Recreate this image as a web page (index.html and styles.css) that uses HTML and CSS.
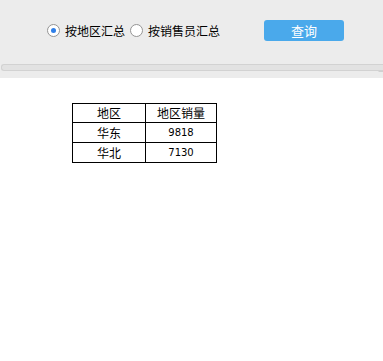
FILE: index.html
```html
<!doctype html>
<html>
<head>
<meta charset="utf-8">
<title>销量汇总</title>
<link rel="stylesheet" href="styles.css">
</head>
<body>
<div class="toolbar">
	<div class="query">
		<label class="opt"><span class="radio on"></span>按地区汇总</label>
		<label class="opt"><span class="radio"></span>按销售员汇总</label>
		<span class="btn">查询</span>
	</div>
	<div class="split"></div>
	<span class="grip"></span>
</div>
<table class="grid">
	<tr class="head"><td class="c1">地区</td><td class="c2">地区销量</td></tr>
	<tr><td>华东</td><td class="num">9818</td></tr>
	<tr><td>华北</td><td class="num">7130</td></tr>
</table>
</body>
</html>
```
FILE: styles.css
```css
body,table,td{margin:0;padding:0;}
body{ background:#fff; font-family:"Microsoft YaHei","Noto Sans CJK SC",sans-serif; color:#000;}

.toolbar{ height:78px; background:#ececec; position:relative; overflow:hidden;}
.query{ display:flex; align-items:center; height:21px; padding:20px 0 0 47px;}
.opt{ display:flex; align-items:center; font-size:12px; line-height:14px; margin-right:5px; letter-spacing:0;}
.radio{ width:11px; height:11px; border:1px solid #949494; border-radius:50%; background:#fff; margin-right:5px; position:relative;}
.radio.on:after{ content:''; position:absolute; left:3px; top:3px; width:5px; height:5px; border-radius:50%; background:#2f7fe8;}
.btn{ width:80px; height:21px; line-height:21px; margin-left:39px; background:#4aa9eb; border-radius:3px; color:#fff; font-size:13px; text-align:center;}
.split{ margin:23px 0 0 1px; height:5px; border:1px solid #d2d2d2; border-right:none; border-radius:3px 0 0 3px; background:#e2e2e2;}
.grip{ position:absolute; right:1px; bottom:1px; width:6px; height:5px; border-top:1px solid #d0d0d0; transform:skewX(-45deg);}

.grid{ border-collapse:collapse; margin:25px 0 0 72px; font-family:"SimSun","Noto Sans CJK SC",sans-serif; font-size:12px;}
.grid td{ border:1px solid #000; height:19px; padding:0; text-align:center; line-height:16px;}
.grid .head td{ height:18px;}
.grid .c1{ width:72px;}
.grid .c2{ width:70px;}
.grid .num{ font-family:"DejaVu Sans","Liberation Sans",sans-serif; font-size:10px;}
```
